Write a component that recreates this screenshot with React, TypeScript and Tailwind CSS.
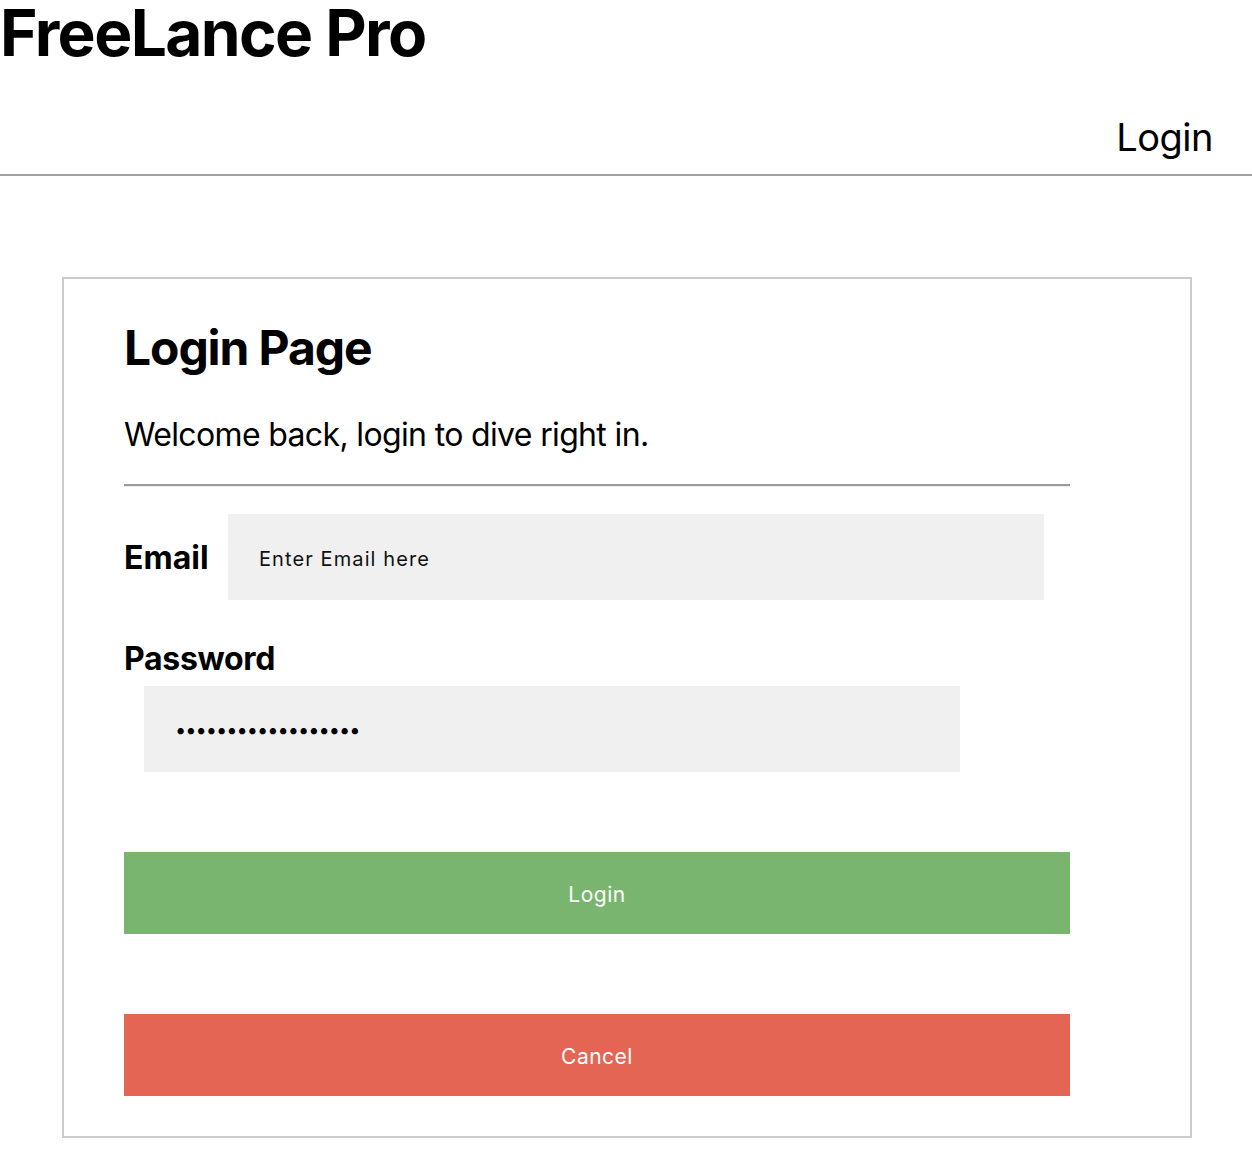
import React from "react";

export default function App() {
    return (
        <div className="min-h-[1154px] bg-white text-black font-['Inter',_'Noto_Sans',_sans-serif]">
            {/* header */}
            <header>
                <h1 className="pt-[1px] text-[64px] font-bold leading-none tracking-[-1.6px]">FreeLance Pro</h1>
                <nav className="mt-[53px] flex justify-end pr-[39px]">
                    <a className="text-[38px] leading-none tracking-[-0.5px] cursor-pointer">Login</a>
                </nav>
                <div className="mt-[18px] border-t-2 border-[#a0a0a0]"></div>
            </header>

            {/* login card */}
            <main className="mt-[101px] ml-[62px] w-[1130px] border-2 border-[#cccccc] pl-[60px] pt-[45px] pb-[40px]">
                <div className="w-[946px]">
                    <h2 className="text-[48px] font-bold leading-none tracking-[-1.1px]">Login Page</h2>
                    <p className="mt-[47px] text-[32px] leading-none tracking-[-0.65px]">Welcome back, login to dive right in.</p>
                    <hr className="mt-[33px] border-t-2 border-b border-t-[#9a9a9a] border-b-[#eeeeee]" />

                    <div className="mt-[27px] flex items-center">
                        <label className="w-[104px] mt-[1px] text-[32px] font-bold leading-none">Email</label>
                        <input
                            type="text"
                            placeholder="Enter Email here"
                            className="h-[86px] w-[816px] bg-[#f0f0f0] pl-[31px] pt-[3px] text-[20px] tracking-[1.1px] text-[#111] placeholder:text-[#111] outline-none"
                        />
                    </div>

                    <label className="mt-[43px] block text-[32px] font-bold leading-none tracking-[-0.3px]">Password</label>
                    <input
                        type="password"
                        defaultValue="passwordpassword12"
                        readOnly
                        className="mt-[11px] ml-[20px] block h-[86px] w-[816px] bg-[#f0f0f0] pl-[31px] pt-[2px] text-[20px] tracking-[-1px] text-black outline-none"
                    />

                    <button className="mt-[80px] block h-[82px] w-full bg-[#79b56f] pt-[4px] text-[21px] tracking-[0.5px] text-white">
                        Login
                    </button>
                    <button className="mt-[80px] block h-[82px] w-full bg-[#e56555] pt-[4px] text-[21px] tracking-[0.5px] text-white">
                        Cancel
                    </button>
                </div>
            </main>
        </div>
    );
}
